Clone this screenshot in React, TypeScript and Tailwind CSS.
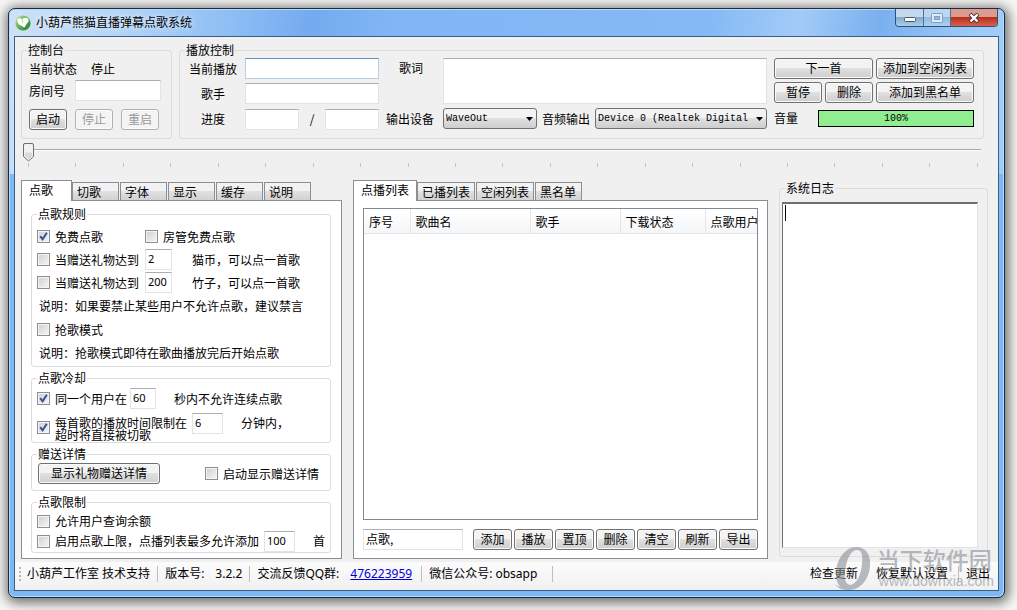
import React, { useState } from 'react'
import clsx from 'clsx'
import { twMerge } from 'tailwind-merge'

const leftTabs = ['点歌', '切歌', '字体', '显示', '缓存', '说明']
const listTabs = ['点播列表', '已播列表', '空闲列表', '黑名单']
const listActions = ['添加', '播放', '置顶', '删除', '清空', '刷新', '导出']
const columns = [
  { name: '序号', width: 'w-[46px]' },
  { name: '歌曲名', width: 'w-[120px]' },
  { name: '歌手', width: 'w-[90px]' },
  { name: '下载状态', width: 'w-[85px]' },
  { name: '点歌用户', width: '' },
]
const ticks = Array.from({ length: 21 }, (_, i) => i)

type GroupProps = {
  title: string
  className?: string
  bodyClass?: string
  children: React.ReactNode
}

const Group: React.FC<GroupProps> = ({ title, className, bodyClass, children }) => (
  <fieldset
    className={clsx('min-w-0 rounded-[3px] border border-[#dcdcdc]', className)}
  >
    <legend className="ml-[5px] px-px leading-4">{title}</legend>
    <div className={bodyClass}>{children}</div>
  </fieldset>
)

const Button: React.FC<React.ButtonHTMLAttributes<HTMLButtonElement>> = ({
  className,
  ...props
}) => (
  <button
    type="button"
    className={clsx(
      'h-[21px] rounded-[3px] border border-[#707070] bg-linear-to-b from-[#f3f3f3] from-45% via-[#e0e0e0] via-50% to-[#cecece] pb-0.5 leading-4 whitespace-nowrap shadow-[inset_0_0_0_1px_#fafafa] disabled:border-[#adb2b5] disabled:bg-[#f4f4f4] disabled:bg-none disabled:text-[#9a9a9a]',
      className
    )}
    {...props}
  />
)

const TextBox: React.FC<React.InputHTMLAttributes<HTMLInputElement>> = ({
  className,
  ...props
}) => (
  <input
    type="text"
    className={twMerge(
      'h-[21px] min-w-0 border border-[#e2e3ea] border-t-[#abadb3] bg-white px-0.5 pb-0.5 outline-none',
      className
    )}
    {...props}
  />
)

// small number box used inside the rule rows
const NumberBox: React.FC<React.InputHTMLAttributes<HTMLInputElement>> = ({
  className,
  ...props
}) => (
  <TextBox
    className={clsx("font-['Noto_Sans'] text-[11px]", className)}
    {...props}
  />
)

type CheckProps = {
  id: string
  checked?: boolean
  className?: string
  children: React.ReactNode
}

const Check: React.FC<CheckProps> = ({ id, checked, className, children }) => (
  <div className={clsx('flex shrink-0 items-center gap-[5px]', className)}>
    <span className="relative block size-[13px] shrink-0">
      <input
        id={id}
        type="checkbox"
        defaultChecked={checked}
        className="peer block size-[13px] appearance-none border border-[#8e8f8f] bg-linear-to-br from-[#cdd0d4] to-[#f6f6f6] shadow-[inset_0_0_0_1px_#f4f4f4]"
      />
      <svg
        viewBox="0 0 13 13"
        className="pointer-events-none absolute inset-0 hidden peer-checked:block"
        fill="none"
        stroke="#3b4f96"
        strokeWidth="2"
      >
        <path d="M3.2 6.2 L5.6 9.2 L9.8 2.8" />
      </svg>
    </span>
    <label htmlFor={id} className="whitespace-nowrap">
      {children}
    </label>
  </div>
)

type SelectProps = { id: string; option: string; className?: string }

const Select: React.FC<SelectProps> = ({ id, option, className }) => (
  <div className={clsx('relative', className)}>
    <select
      id={id}
      className="block h-[21px] w-full appearance-none rounded-[3px] border border-[#707070] bg-linear-to-b from-[#f3f3f3] from-45% via-[#e0e0e0] via-50% to-[#cecece] pr-4 pl-0.5 font-['Liberation_Mono'] text-[10px]"
    >
      <option>{option}</option>
    </select>
    <svg
      viewBox="0 0 7 4"
      className="pointer-events-none absolute top-[9px] right-1 h-1 w-[7px]"
    >
      <path d="M0 0h7L3.5 4z" />
    </svg>
  </div>
)

type TabsProps = {
  names: string[]
  active: string
  onSelect: (name: string) => void
}

const Tabs: React.FC<TabsProps> = ({ names, active, onSelect }) => (
  <div role="tablist" className="flex h-[21px] items-end gap-px">
    {names.map((name) => (
      <button
        key={name}
        type="button"
        role="tab"
        aria-selected={name === active}
        onClick={() => onSelect(name)}
        className={clsx(
          'relative border border-b-0 border-[#8c8e94] text-left whitespace-nowrap',
          name === active
            ? '-mr-px h-[21px] min-w-[51px] bg-white px-[7px] pb-0.5'
            : 'mb-px h-[18px] min-w-[47px] bg-linear-to-b from-[#f2f2f2] from-45% via-[#e0e0e0] via-50% to-[#d2d2d2] px-1 leading-4'
        )}
      >
        {name}
      </button>
    ))}
  </div>
)

const Divider: React.FC<{ className?: string }> = ({ className }) => (
  <span className={clsx('h-4 w-px bg-[#bdbdbd]', className)} />
)

const TitleBar = () => (
  <div className="flex h-[27px] items-center pl-1.5">
    <svg viewBox="0 0 16 16" className="size-4">
      <defs>
        <linearGradient id="leaf" x1="0" y1="0" x2="1" y2="1">
          <stop offset="0" stopColor="#c4e8ac" />
          <stop offset="0.5" stopColor="#5fb352" />
          <stop offset="1" stopColor="#1d6e2c" />
        </linearGradient>
      </defs>
      <circle cx="8" cy="8" r="7.6" fill="url(#leaf)" />
      <path
        d="M2.400 4.500C3.500 2.800 5.800 3 7 4.600 8 3 10.600 2 12.600 3.200 14.400 4.600 13.600 7 12 8.200 10.800 9.200 10.600 11.400 9 12.800 8.200 11.800 7.400 11.400 5.800 10.600 3.400 9.400 1.600 7 2.400 4.500z"
        fill="#fff"
      />
      <path d="M7 4.600c.8 1.200.8 2.400.2 3.400" fill="none" stroke="#9fd08e" />
    </svg>
    <h1 className="ml-[5px] flex-1 pb-0.5 [text-shadow:0_0_6px_#fff]">
      小葫芦熊猫直播弹幕点歌系统
    </h1>
    <div className="mr-1.5 flex h-[18px] self-start overflow-hidden rounded-b-[4px] border border-t-0 border-[#33506f]">
      <button
        type="button"
        aria-label="最小化"
        className="flex w-7 items-end justify-center border-r border-[#4f6f93] bg-linear-to-b from-[#c4d9ee] from-45% via-[#86a9cc] via-50% to-[#a9cdee] pb-1"
      >
        <svg viewBox="0 0 12 5" className="h-[5px] w-3">
          <rect x=".5" y=".5" width="11" height="4" rx="1" fill="#fff" stroke="#4a5a6c" />
        </svg>
      </button>
      <button
        type="button"
        aria-label="最大化"
        disabled
        className="flex w-[27px] items-center justify-center border-r border-[#4f6f93] bg-linear-to-b from-[#bcd6f1] from-45% via-[#94bbe2] via-50% to-[#a9d0f5]"
      >
        <svg viewBox="0 0 12 10" className="h-2.5 w-3" fill="none">
          <rect x=".5" y=".5" width="11" height="9" rx="1" stroke="#7f9fc0" />
          <rect x="2" y="2" width="8" height="6" stroke="#dcebf9" strokeWidth="2" />
          <rect x="3.500" y="3.500" width="5" height="3" stroke="#7f9fc0" />
        </svg>
      </button>
      <button
        type="button"
        aria-label="关闭"
        className="flex w-[46px] items-center justify-center bg-linear-to-b from-[#dd9a8f] from-45% via-[#b92d1c] via-50% to-[#d8614c]"
      >
        <svg viewBox="0 0 12 10" className="h-2.5 w-3">
          <path d="M2 1l8 8M10 1L2 9" stroke="#4a3038" strokeWidth="4" />
          <path d="M2.500 1.500l7 7M9.500 1.500l-7 7" stroke="#fff" strokeWidth="2.400" />
        </svg>
      </button>
    </div>
  </div>
)

const ConsoleGroup = () => (
  <Group title="控制台" className="h-[97px] w-[151px]" bodyClass="pl-[7px]">
    <div className="flex h-[22px] items-center gap-[14px]">
      <span>当前状态</span>
      <span>停止</span>
    </div>
    <div className="flex items-center gap-[10px]">
      <label htmlFor="room">房间号</label>
      <TextBox id="room" className="w-[86px]" />
    </div>
    <div className="mt-2 flex gap-2">
      <Button className="w-[38px]">启动</Button>
      <Button className="w-[38px]" disabled>
        停止
      </Button>
      <Button className="w-[38px]" disabled>
        重启
      </Button>
    </div>
  </Group>
)

const PlayGroup = () => (
  <Group
    title="播放控制"
    className="h-[97px] flex-1"
    bodyClass="flex gap-[7px] pr-[9px] pl-2"
  >
    <div className="grid grid-cols-[50px_134px] items-center gap-x-[7px] gap-y-1 text-center">
      <label htmlFor="current">当前播放</label>
      <TextBox id="current" className="border-[#b5cfe7] border-t-[#5f94c2]" />
      <label htmlFor="singer">歌手</label>
      <TextBox id="singer" />
      <label htmlFor="elapsed">进度</label>
      <div className="flex items-center justify-between">
        <TextBox id="elapsed" className="w-[54px]" />
        <span>/</span>
        <TextBox aria-label="总时长" className="w-[54px]" />
      </div>
    </div>
    <div className="flex min-w-0 flex-1 flex-col gap-1">
      <div className="flex">
        <label htmlFor="lyric" className="w-[57px] pt-0.5 pl-[13px]">
          歌词
        </label>
        <textarea
          id="lyric"
          className="h-[46px] min-w-0 flex-1 resize-none border border-[#e2e3ea] border-t-[#abadb3] bg-white outline-none"
        />
      </div>
      <div className="flex items-center">
        <label htmlFor="output" className="w-[57px]">
          输出设备
        </label>
        <Select id="output" option="WaveOut" className="w-[94px]" />
        <label htmlFor="audio" className="w-[58px] text-center">
          音频输出
        </label>
        <Select
          id="audio"
          option="Device 0 (Realtek Digital"
          className="min-w-0 flex-1"
        />
      </div>
    </div>
    <div className="flex w-[200px] flex-col gap-[3px]">
      <div className="grid grid-cols-[48px_48px_98px] gap-[3px]">
        <Button className="col-span-2">下一首</Button>
        <Button>添加到空闲列表</Button>
        <Button>暂停</Button>
        <Button>删除</Button>
        <Button>添加到黑名单</Button>
      </div>
      <div className="flex h-6 items-center gap-5">
        <span>音量</span>
        <div
          role="progressbar"
          aria-label="音量"
          aria-valuenow={100}
          className="h-[17px] flex-1 border border-black bg-[#90ee90] text-center font-['Liberation_Mono'] text-[10px] leading-[15px]"
        >
          100%
        </div>
      </div>
    </div>
  </Group>
)

const SeekBar = () => {
  const [value, setValue] = useState(0)
  return (
    <div className="mt-[3px] pr-[17px] pl-2">
      <div className="relative h-4">
        <div className="absolute inset-x-0 top-[7px] h-0.5 border-t border-[#a8a8a8] bg-white" />
        <input
          type="range"
          aria-label="播放进度"
          min={0}
          max={100}
          value={value}
          onChange={(e) => setValue(Number(e.target.value))}
          className="absolute inset-0 w-full opacity-0"
        />
        <svg
          viewBox="0 0 11 19"
          className="pointer-events-none absolute top-px h-[19px] w-[11px]"
          style={{ left: `${value}%` }}
        >
          <path
            d="M.5 2Q.5.5 2 .5h7Q10.500.5 10.500 2v11.500l-5 4.500-5-4.500z"
            fill="#f1f1f1"
            stroke="#6e6e6e"
          />
          <path d="M2 9.500h7v3.500L5.500 16.200 2 13z" fill="#d9d9d9" />
        </svg>
      </div>
      <div className="mt-[5px] flex h-1 justify-between pr-[3px] pl-[5px]">
        {ticks.map((t) => (
          <span key={t} className="w-px bg-[#c4c4c4]" />
        ))}
      </div>
    </div>
  )
}

const RulesPanel = () => {
  const [tab, setTab] = useState('点歌')
  return (
    <section className="flex w-[321px] flex-col">
      <Tabs names={leftTabs} active={tab} onSelect={setTab} />
      <div className="-mt-px flex flex-1 flex-col gap-[3px] border border-[#8c8e94] bg-white pt-[5px] pr-2.5 pb-[5px] pl-[9px]">
        <Group title="点歌规则" bodyClass="px-[5px] pt-[3px] pb-px">
          <div className="flex h-[23px] items-center">
            <Check id="free" checked className="w-[108px]">
              免费点歌
            </Check>
            <Check id="adminFree">房管免费点歌</Check>
          </div>
          <div className="flex h-[23px] items-center">
            <Check id="gift" className="w-[108px]">
              当赠送礼物达到
            </Check>
            <NumberBox aria-label="猫币数量" defaultValue="2" className="w-[27px]" />
            <span className="ml-5">猫币，可以点一首歌</span>
          </div>
          <div className="flex h-[23px] items-center">
            <Check id="bamboo" className="w-[108px]">
              当赠送礼物达到
            </Check>
            <NumberBox aria-label="竹子数量" defaultValue="200" className="w-[27px]" />
            <span className="ml-5">竹子，可以点一首歌</span>
          </div>
          <p className="pl-0.5 leading-6">
            说明：如果要禁止某些用户不允许点歌，建议禁言
          </p>
          <Check id="grab" className="h-[23px]">
            抢歌模式
          </Check>
          <p className="pl-0.5 leading-6">
            说明：抢歌模式即待在歌曲播放完后开始点歌
          </p>
        </Group>

        <Group title="点歌冷却" bodyClass="px-[5px] pt-px pb-px">
          <div className="flex h-[23px] items-center">
            <Check id="sameUser" checked className="w-[93px]">
              同一个用户在
            </Check>
            <NumberBox aria-label="间隔秒数" defaultValue="60" className="w-[26px]" />
            <span className="ml-[18px]">秒内不允许连续点歌</span>
          </div>
          <div className="mt-[3px] flex items-start">
            <Check id="limit" checked className="w-[155px]">
              <span className="block pt-1 leading-3">
                每首歌的播放时间限制在
                <br />
                超时将直接被切歌
              </span>
            </Check>
            <NumberBox aria-label="限制分钟" defaultValue="6" className="w-[31px]" />
            <span className="ml-[18px] leading-5">分钟内，</span>
          </div>
        </Group>

        <Group title="赠送详情" bodyClass="px-1.5 pt-px pb-1.5">
          <div className="flex items-center">
            <Button className="w-[122px]">显示礼物赠送详情</Button>
            <Check id="showGift" className="ml-[45px]">
              启动显示赠送详情
            </Check>
          </div>
        </Group>

        <Group title="点歌限制" bodyClass="px-[5px] pt-px pb-px">
          <Check id="balance" className="h-5">
            允许用户查询余额
          </Check>
          <div className="flex h-5 items-center">
            <Check id="maxSongs" className="w-[227px]">
              启用点歌上限，点播列表最多允许添加
            </Check>
            <NumberBox aria-label="点歌上限" defaultValue="100" className="w-[31px]" />
            <span className="ml-[18px]">首</span>
          </div>
        </Group>
      </div>
    </section>
  )
}

const SongList = () => {
  const [tab, setTab] = useState('点播列表')
  return (
    <section className="flex min-w-0 flex-1 flex-col">
      <Tabs names={listTabs} active={tab} onSelect={setTab} />
      <div className="-mt-px flex flex-1 flex-col border border-[#8c8e94] bg-white px-[9px] pt-[7px] pb-2">
        <div className="flex-1 overflow-hidden border border-[#828790]">
          <table className="w-full table-fixed border-collapse">
            <thead>
              <tr className="h-6 bg-linear-to-b from-white to-[#f5f6f8]">
                {columns.map((c) => (
                  <th
                    key={c.name}
                    className={clsx(
                      'overflow-hidden border-r border-b border-[#e3e5e8] pt-0.5 pl-[5px] text-left font-normal whitespace-nowrap last:border-r-0',
                      c.width
                    )}
                  >
                    {c.name}
                  </th>
                ))}
              </tr>
            </thead>
            <tbody />
          </table>
        </div>
        <div className="mt-[9px] flex justify-between">
          <TextBox aria-label="点歌指令" defaultValue="点歌," className="w-[100px]" />
          <div className="flex gap-0.5">
            {listActions.map((a) => (
              <Button key={a} className="w-[39px]">
                {a}
              </Button>
            ))}
          </div>
        </div>
      </div>
    </section>
  )
}

const LogPanel = () => (
  <Group
    title="系统日志"
    className="mb-0.5 flex w-[209px] flex-col"
    bodyClass="relative flex flex-1 pt-1.5 pr-[9px] pb-2 pl-0.5"
  >
    <textarea
      aria-label="系统日志"
      className="flex-1 resize-none border border-t-2 border-[#e3e3e3] border-t-[#6f6f6f] border-l-[#6f6f6f] bg-white outline-none"
    />
    {/* text cursor */}
    <span className="absolute top-[9px] left-[5px] h-4 w-px bg-black" />
  </Group>
)

const Watermark = () => (
  <div className="pointer-events-none absolute right-1 -bottom-0.5 flex items-center gap-1.5 text-[#8a8f96] opacity-60">
    <svg viewBox="0 0 36 46" className="h-[46px] w-9" fill="currentColor">
      <path
        fillRule="evenodd"
        d="M21 1C31 1 36 9 35 20 34 34 25 44 14 44 5 44 0 36 1 26 2 12 11 1 21 1zM22 4C15 4 11 15 10 26 9 34 11 39 16 39 22 39 26 28 27 18 28 10 27 4 22 4z"
      />
      <path d="M0 38C7 44 18 41 25 31 22 43 8 49 0 38z" />
    </svg>
    <div>
      <div className="text-[23px] leading-6 font-medium">当下软件园</div>
      <div className="pl-0.5 font-['Liberation_Sans'] text-[14px] leading-[18px]">
        www.downxia.com
      </div>
    </div>
  </div>
)

const StatusBar = () => (
  <footer className="relative flex h-7 items-center bg-linear-to-b from-[#fcfcfc] to-[#f0f0f0] pr-2 pb-1 pl-1 font-['Noto_Sans','Noto_Sans_CJK_SC',sans-serif] whitespace-nowrap">
    <svg viewBox="0 0 2 14" className="h-3.5 w-0.5" fill="#b5b5b5">
      <path d="M0 0h2v2H0zM0 4h2v2H0zM0 8h2v2H0zM0 12h2v2H0z" />
    </svg>
    <div className="ml-1.5 flex flex-1 items-center gap-[7px]">
      <span>小葫芦工作室 技术支持</span>
      <Divider />
      <span>版本号:</span>
      <span className="ml-1">3.2.2</span>
      <Divider />
      <span>交流反馈QQ群:</span>
      <a href="#qq" className="ml-1 text-[#0000dd] underline">
        476223959
      </a>
      <Divider className="ml-0.5" />
      <span>微信公众号: obsapp</span>
      <Divider className="ml-2" />
    </div>
    <button type="button" className="mr-[18px]">
      检查更新
    </button>
    <button type="button" className="mr-2.5">
      恢复默认设置
    </button>
    <Divider />
    <button type="button" className="ml-[7px]">
      退出
    </button>
    <Watermark />
  </footer>
)

export default function App() {
  return (
    <div className="flex min-h-screen flex-col bg-[#f6f6f5] pt-2 pr-3 pb-3 pl-2 font-['Noto_Sans_CJK_SC',sans-serif] text-xs text-black">
      <div className="flex flex-1 flex-col rounded-[7px] border border-[#1b2c42] bg-[#7db7f5] bg-[linear-gradient(100deg,#cfe2f6_0px,#b4d4f7_110px,#8abcf4_230px,#74abef_300px,#80b6f4_380px,#84b9f5_690px,#a3cbf7_780px,#79b0ef_860px,#9fcbf8_960px)] bg-[length:100%_165px] bg-no-repeat shadow-[1px_2px_12px_3px_rgba(0,0,0,0.55),inset_0_0_0_1px_#b5dbfb]">
        <TitleBar />
        <div className="mx-[5px] mb-1.5 flex flex-1 flex-col border border-[#3d5f86] bg-[#f0f0f0]">
          <main className="flex flex-1 flex-col pt-[5px] pb-[3px]">
            <div className="flex gap-[7px] pr-[14px] pl-1.5">
              <ConsoleGroup />
              <PlayGroup />
            </div>
            <SeekBar />
            <div className="mt-[13px] flex flex-1 gap-[11px] pr-2.5 pl-1.5">
              <RulesPanel />
              <SongList />
              <LogPanel />
            </div>
          </main>
          <StatusBar />
        </div>
      </div>
    </div>
  )
}
